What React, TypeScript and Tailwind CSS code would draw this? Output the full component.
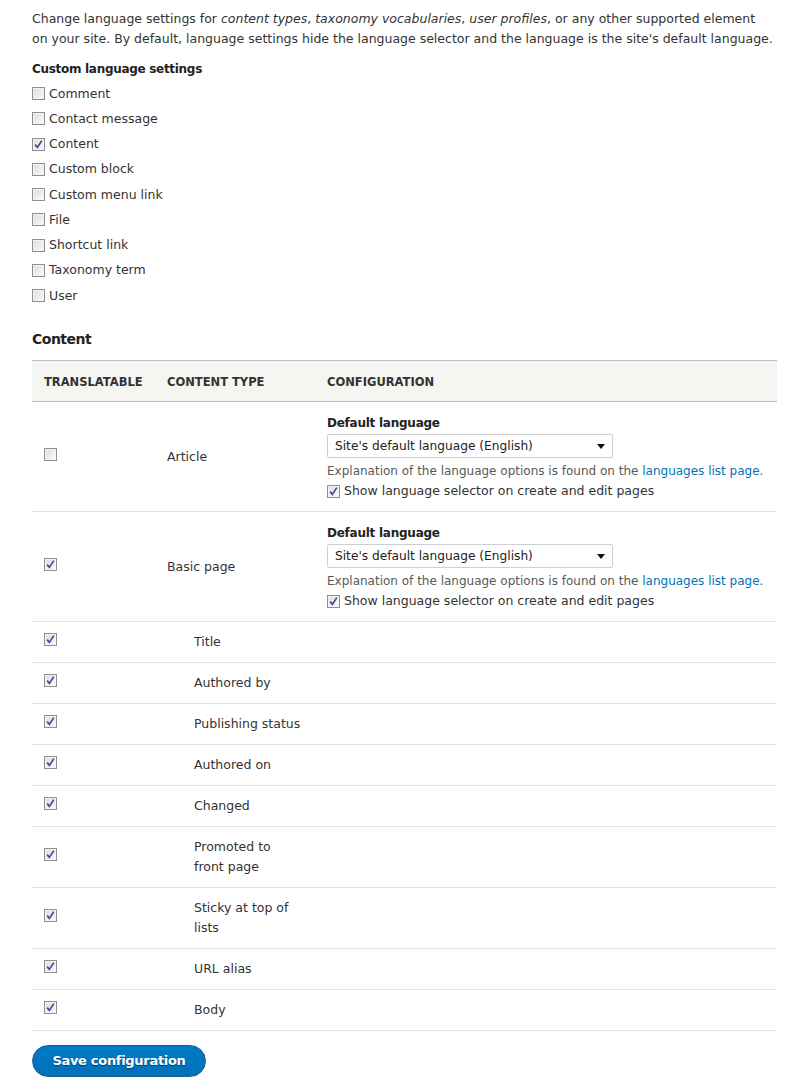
import React from "react";

const Checkbox = ({ checked }: { checked?: boolean }) => (
  <span className="relative inline-flex h-[13px] w-[13px] shrink-0 items-center justify-center border border-[#8e8f8f] bg-gradient-to-br from-[#dcdcdc] to-[#fbfbfb] shadow-[inset_0_0_0_1px_#f4f4f4]">
    {checked && (
      <svg viewBox="0 0 13 13" className="absolute left-[-1px] top-[-1px] h-[13px] w-[13px]">
        <path d="M3.2 6.6 L5.4 9.4 L9.8 2.6" fill="none" stroke="#3d4c95" strokeWidth="1.7" />
      </svg>
    )}
  </span>
);

const customItems = [
  { label: "Comment" },
  { label: "Contact message" },
  { label: "Content", checked: true },
  { label: "Custom block" },
  { label: "Custom menu link" },
  { label: "File" },
  { label: "Shortcut link" },
  { label: "Taxonomy term" },
  { label: "User" },
];

const fields = [
  "Title",
  "Authored by",
  "Publishing status",
  "Authored on",
  "Changed",
  "Promoted to front page",
  "Sticky at top of lists",
  "URL alias",
  "Body",
];

const LanguageConfig = () => (
  <div className="flex flex-col pb-[10px] pt-[11px]">
    <div className="text-[12px] font-bold leading-[20px] tracking-[-0.25px] text-[#222]">
      Default language
    </div>
    <div className="mt-[1px] flex h-[24px] w-[286px] items-center justify-between rounded-[2px] border border-[#cfcfcf] bg-white pl-[7px] pr-[7px]">
      <span className="text-[12.2px] text-[#222]">Site's default language (English)</span>
      <svg viewBox="0 0 8 5" className="h-[5px] w-[8px]">
        <path d="M0 0 L8 0 L4 5 Z" fill="#111" />
      </svg>
    </div>
    <div className="mt-[3px] text-[12px] leading-[20px] text-[#595959]">
      Explanation of the language options is found on the{" "}
      <span className="text-[#0074bd]">languages list page</span>.
    </div>
    <div className="flex items-center gap-[4px] leading-[20px]">
      <Checkbox checked />
      <span>Show language selector on create and edit pages</span>
    </div>
  </div>
);

export default function App() {
  return (
    <div
      className="min-h-screen bg-white pl-[32px] pr-[31px] pt-[9px] text-[12.5px] leading-[20px] text-[#333]"
      style={{ fontFamily: '"DejaVu Sans", Verdana, sans-serif' }}
    >
      <p>
        Change language settings for <em>content types</em>, <em>taxonomy vocabularies</em>,{" "}
        <em>user profiles</em>, or any other supported element
        <br />
        on your site. By default, language settings hide the language selector and the language is
        the site's default language.
      </p>

      <div className="mt-[10px] text-[12px] font-bold tracking-[-0.3px] text-[#222]">
        Custom language settings
      </div>
      <div className="mt-[2px] flex flex-col">
        {customItems.map((item) => (
          <div key={item.label} className="flex h-[25.25px] items-center gap-[4px]">
            <Checkbox checked={item.checked} />
            <span>{item.label}</span>
          </div>
        ))}
      </div>

      <h2 className="mt-[21px] text-[14px] font-bold leading-[20px] tracking-[-0.5px] text-[#222]">
        Content
      </h2>

      <div className="mt-[11px] border-t border-[#bfbfba]">
        <div className="flex h-[41px] items-center border-b border-[#bfbfba] bg-[#f5f5f2] pt-[1px] text-[11.5px] font-bold uppercase text-[#333]">
          <div className="w-[123px] pl-[12px]">Translatable</div>
          <div className="w-[160px] pl-[12px]">Content type</div>
          <div className="flex-1 pl-[12px]">Configuration</div>
        </div>

        {["Article", "Basic page"].map((name, i) => (
          <div key={name} className="flex items-center border-b border-[#e6e4df]">
            <div className="w-[123px] pl-[12px]">
              <Checkbox checked={i === 1} />
            </div>
            <div className="w-[160px] pl-[12px]">{name}</div>
            <div className="flex-1 pl-[12px]">
              <LanguageConfig />
            </div>
          </div>
        ))}

        {fields.map((name) => (
          <div key={name} className="flex items-center border-b border-[#e6e4df] py-[10px]">
            <div className="w-[123px] pl-[12px]">
              <Checkbox checked />
            </div>
            <div className="w-[160px] pl-[39px]">
              <div className="w-[108px]">{name}</div>
            </div>
            <div className="flex-1" />
          </div>
        ))}
      </div>

      <button className="mt-[14px] flex h-[32px] w-[174px] items-center justify-center rounded-full border border-[#1e5c90] bg-gradient-to-b from-[#007bc6] to-[#0071b8] text-[13px] font-bold tracking-[-0.3px] text-white [text-shadow:0_1px_1px_rgba(0,0,0,0.5)]">
        Save configuration
      </button>
    </div>
  );
}
